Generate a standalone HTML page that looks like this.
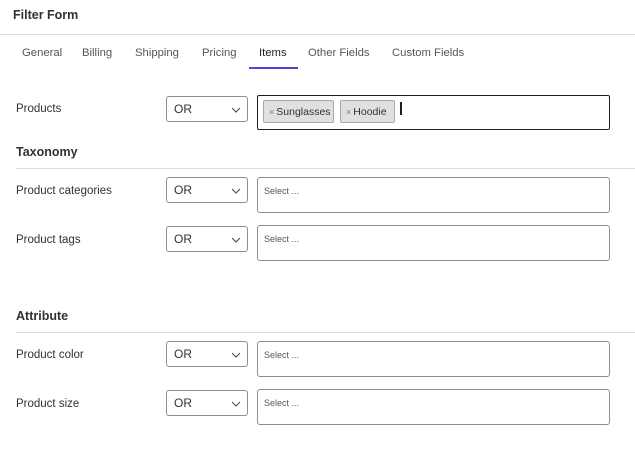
<html><head><style>
body{margin:0;width:635px;height:451px;background:#fff;font-family:"Liberation Sans",sans-serif;color:#1e1e1e;position:relative;overflow:hidden}
.a{position:absolute;white-space:nowrap}
.t{font-size:11.3px;color:#50575e}
.l{font-size:11.5px;color:#2c3338}
.h{font-size:12.5px;font-weight:bold;color:#2c3338}
.sel{position:absolute;left:166px;width:82px;height:26px;border:1px solid #8c8f94;border-radius:3px;box-sizing:border-box;font-size:12px;color:#2c3338}
.sel span{position:absolute;left:7px;top:5px}
.sel svg{position:absolute;right:6px;top:10px}
.inp{position:absolute;left:257px;width:353px;height:36px;border:1px solid #8c8f94;border-radius:3px;box-sizing:border-box;font-size:9px;color:#50575e}
.inp span{position:absolute;left:6px;top:8px}
.chip{position:absolute;top:4px;height:23px;border:1px solid #a7aaad;background:#e0e0e0;border-radius:2px;box-sizing:border-box;font-size:10.5px;color:#2c3338;padding:5px 4px 0 5px}
.chip i{font-style:normal;font-size:9px;color:#777;margin-right:2px}
</style></head><body>
<div class="a h" style="left:13px;top:8px">Filter Form</div>
<div class="a" style="left:0;top:34px;width:635px;height:1px;background:#dcdcde"></div>
<div class="a t" style="left:22px;top:47px">General</div>
<div class="a t" style="left:82px;top:47px">Billing</div>
<div class="a t" style="left:135px;top:47px">Shipping</div>
<div class="a t" style="left:202px;top:47px">Pricing</div>
<div class="a t" style="left:259px;top:47px;color:#1e1e1e">Items</div>
<div class="a t" style="left:308px;top:47px">Other Fields</div>
<div class="a t" style="left:392px;top:47px">Custom Fields</div>
<div class="a" style="left:249px;top:67px;width:49px;height:2px;background:#5b3fd1"></div>

<div class="a l" style="left:16px;top:103px">Products</div>
<div class="sel" style="top:96px"><span>OR</span><svg width="10" height="6"><path d="M1 1l4 4 4-4" fill="none" stroke="#555" stroke-width="1.2"/></svg></div>
<div class="inp" style="top:95px;height:35px;border-color:#1e1e1e;border-radius:2px">
<div class="chip" style="left:5px;width:71px"><i>×</i>Sunglasses</div>
<div class="chip" style="left:82px;width:55px"><i>×</i>Hoodie</div>
<div class="a" style="left:142px;top:6px;width:2px;height:13px;background:#1e1e1e"></div>
</div>

<div class="a h" style="left:16px;top:145px">Taxonomy</div>
<div class="a" style="left:16px;top:168px;width:619px;height:1px;background:#dcdcde"></div>
<div class="a l" style="left:16px;top:185px">Product categories</div>
<div class="sel" style="top:177px"><span>OR</span><svg width="10" height="6"><path d="M1 1l4 4 4-4" fill="none" stroke="#555" stroke-width="1.2"/></svg></div>
<div class="inp" style="top:177px"><span>Select ...</span></div>
<div class="a l" style="left:16px;top:234px">Product tags</div>
<div class="sel" style="top:226px"><span>OR</span><svg width="10" height="6"><path d="M1 1l4 4 4-4" fill="none" stroke="#555" stroke-width="1.2"/></svg></div>
<div class="inp" style="top:225px"><span>Select ...</span></div>

<div class="a h" style="left:16px;top:309px">Attribute</div>
<div class="a" style="left:16px;top:332px;width:619px;height:1px;background:#dcdcde"></div>
<div class="a l" style="left:16px;top:349px">Product color</div>
<div class="sel" style="top:341px"><span>OR</span><svg width="10" height="6"><path d="M1 1l4 4 4-4" fill="none" stroke="#555" stroke-width="1.2"/></svg></div>
<div class="inp" style="top:341px"><span>Select ...</span></div>
<div class="a l" style="left:16px;top:398px">Product size</div>
<div class="sel" style="top:390px"><span>OR</span><svg width="10" height="6"><path d="M1 1l4 4 4-4" fill="none" stroke="#555" stroke-width="1.2"/></svg></div>
<div class="inp" style="top:389px"><span>Select ...</span></div>
</body></html>
